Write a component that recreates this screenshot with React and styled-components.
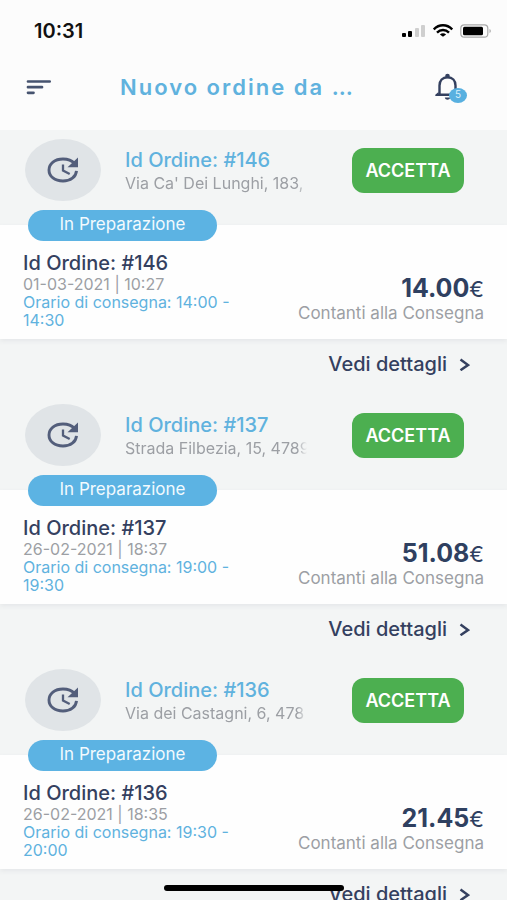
import React from 'react';
import styled, { createGlobalStyle } from 'styled-components';

const GlobalStyle = createGlobalStyle`
  *, *::before, *::after {
    box-sizing: border-box;
  }
  html {
    scrollbar-width: none;
  }
  body {
    margin: 0;
    background-color: #f3f5f5;
    font-family: Inter, "Open Sans", sans-serif;
    color: #34405f;
  }
  h1, h2, h3, p {
    margin: 0;
  }
  button {
    border: 0;
    padding: 0;
    background: none;
    font-family: inherit;
    cursor: pointer;
  }
  svg {
    display: block;
  }
`;

const Header = styled.header`
  background-color: #fcfcfc;
`;

const StatusBar = styled.div`
  display: flex;
  align-items: center;
  justify-content: space-between;
  height: 62px;
  padding: 0 15px 0 34px;
`;

const Time = styled.span`
  font-size: 20px;
  line-height: 24px;
  font-weight: 600;
  color: #111;
`;

const StatusIcons = styled.div`
  display: flex;
  align-items: center;
  gap: 7px;
`;

const NavBar = styled.nav`
  display: flex;
  align-items: center;
  height: 68px;
  padding: 0 40px 18px 26px;
`;

const PageTitle = styled.h1`
  flex: 1;
  margin-left: 68px;
  font-size: 22px;
  line-height: 28px;
  font-weight: 600;
  letter-spacing: 2px;
  color: #60b2de;
`;

const IconButton = styled.button`
  position: relative;
  display: flex;
`;

const Badge = styled.span`
  position: absolute;
  right: 0;
  bottom: -2px;
  width: 18px;
  height: 15px;
  border-radius: 50%;
  background-color: #58b0e0;
  color: #d9effa;
  font-size: 10px;
  line-height: 13px;
  text-align: center;
`;

const OrderTop = styled.div`
  display: flex;
  align-items: flex-start;
  height: 95px;
  padding: 9px 43px 0 25px;
`;

const OrderIcon = styled.div`
  display: flex;
  align-items: center;
  justify-content: center;
  flex-shrink: 0;
  width: 76px;
  height: 62px;
  border-radius: 50%;
  background-color: #e0e4e7;
`;

const OrderInfo = styled.div`
  flex: 1;
  min-width: 0;
  margin: 10px 45px 0 24px;
`;

const OrderName = styled.h2`
  font-size: 20px;
  line-height: 23px;
  font-weight: 500;
  color: ${({ $accent }) => ($accent ? '#60b2de' : '#34405f')};
`;

const Address = styled.p`
  overflow: hidden;
  white-space: nowrap;
  font-size: 16px;
  line-height: 22px;
  color: #9c9fa4;
  mask-image: linear-gradient(to right, #000 calc(100% - 10px), transparent);
`;

const AcceptButton = styled.button`
  flex-shrink: 0;
  width: 112px;
  height: 45px;
  margin-top: 9px;
  padding-bottom: 1px;
  border-radius: 12px;
  background-color: #4caf50;
  color: #fff;
  font-size: 18px;
  font-weight: 600;
`;

const OrderBody = styled.div`
  padding: 0 23px 10px;
  background-color: #fefefe;
  box-shadow: 0 2px 5px rgba(60, 70, 90, .08);
`;

const Status = styled.div`
  position: relative;
  top: -15px;
  width: 189px;
  height: 31px;
  margin: 0 0 -4px 5px;
  border-radius: 16px;
  background-color: #5cb3e3;
  color: #f2fafe;
  font-size: 17px;
  line-height: 29px;
  text-align: center;
`;

const OrderDetails = styled.div`
  display: flex;
  align-items: flex-end;
  justify-content: space-between;
`;

const OrderData = styled.div`
  width: 216px;
`;

const Line = styled.p`
  font-size: 16px;
  line-height: 18px;
  color: ${({ $accent }) => ($accent ? '#60b2de' : '#9c9fa4')};
`;

const Payment = styled.div`
  padding-bottom: 6px;
  text-align: right;
`;

const Price = styled.p`
  font-size: 25px;
  line-height: 28px;
  font-weight: 700;
  color: #2f4060;
  & span {
    font-size: 22px;
    font-weight: 400;
  }
`;

const Method = styled.p`
  font-size: 17px;
  line-height: 20px;
  color: #9c9fa4;
`;

const OrderFooter = styled.div`
  display: flex;
  justify-content: flex-end;
  height: 56px;
  padding: 13px 37px 0 0;
`;

const DetailsLink = styled.a`
  display: flex;
  align-items: center;
  gap: 12px;
  height: 24px;
  font-size: 20px;
  line-height: 24px;
  font-weight: 500;
  color: #34405f;
  text-decoration: none;
`;

const HomeIndicator = styled.div`
  position: fixed;
  bottom: 9px;
  left: 50%;
  width: 180px;
  height: 6px;
  border-radius: 3px;
  background-color: #000;
  transform: translateX(-50%);
`;

const orders = [
  {
    id: 146,
    address: "Via Ca' Dei Lunghi, 183, 4",
    date: '01-03-2021 | 10:27',
    delivery: '14:00 - 14:30',
    price: '14.00',
  },
  {
    id: 137,
    address: 'Strada Filbezia, 15, 4789',
    date: '26-02-2021 | 18:37',
    delivery: '19:00 - 19:30',
    price: '51.08',
  },
  {
    id: 136,
    address: 'Via dei Castagni, 6, 478',
    date: '26-02-2021 | 18:35',
    delivery: '19:30 - 20:00',
    price: '21.45',
  },
];

const SignalIcon = () => (
  <svg width="24" height="14" viewBox="0 0 24 14">
    <rect x="0" y="9" width="4" height="4" rx="1" fill="#000" />
    <rect x="6" y="7" width="4" height="6" rx="1" fill="#000" />
    <rect x="13" y="4" width="4" height="9" rx="1" fill="#cfcfcf" />
    <rect x="19" y="1" width="4" height="12" rx="1" fill="#cfcfcf" />
  </svg>
);

const WifiIcon = () => (
  <svg width="20" height="14" viewBox="0 0 20 14" fill="none" stroke="#000" strokeWidth="2.4">
    <path d="M.8 5.4C6-.1 14-.1 19.2 5.4" />
    <path d="M4 8.6c3.5-3.4 8.5-3.4 12 0" />
    <path d="M10 12.8 6.9 10.4c1.8-1.5 4.4-1.5 6.2 0z" fill="#000" stroke="none" />
  </svg>
);

const BatteryIcon = () => (
  <svg width="32" height="14" viewBox="0 0 32 14">
    <rect x=".8" y=".8" width="27" height="12.4" rx="3.5" fill="none" stroke="#a9a9a9" strokeWidth="1.2" />
    <rect x="3" y="2.8" width="20" height="8.4" rx="1.5" fill="#000" />
    <path d="M29.5 5v4c1.8-.6 1.8-3.4 0-4z" fill="#a9a9a9" />
  </svg>
);

const MenuIcon = () => (
  <svg width="26" height="16" viewBox="0 0 26 16" stroke="#46536f" strokeWidth="2.7" strokeLinecap="round">
    <path d="M2 2.5h21.7M2 8.2h14M2 13.8h5.5" />
  </svg>
);

const BellIcon = () => (
  <svg width="32" height="28" viewBox="0 0 32 28">
    <circle cx="12.5" cy="3" r="2.3" fill="#34405f" />
    <path
      d="M4.5 21v-8.500C4.5 7.5 7.500 4.300 12.500 4.300S20.500 7.500 20.500 12.500V21"
      fill="none"
      stroke="#34405f"
      strokeWidth="2.4"
    />
    <path d="M3.5 19 .3 21.800V23h24.400v-1.200L21.500 19v1.600h-18z" fill="#34405f" />
    <path d="M9.8 24.600h5.400c-.5 2.900-4.900 2.900-5.400 0z" fill="#34405f" />
  </svg>
);

const UpdateIcon = () => (
  <svg width="32" height="26" viewBox="0 0 32 26" fill="none" stroke="#535e7b">
    <path d="M29.5 13.8C29 19.8 23.500 24 16 24 7.800 24 2 19.500 2 13S7.800 2 16 2c5 0 9 1.700 11.500 4.600" strokeWidth="2.9" />
    <path d="M31 .4v9.800H20.500z" fill="#535e7b" stroke="none" />
    <path d="M16 7.500v6l6.700 3.500" strokeWidth="2.3" />
  </svg>
);

const ChevronIcon = () => (
  <svg width="11" height="14" viewBox="0 0 11 14" fill="none" stroke="#34405f" strokeWidth="2.5">
    <path d="M1.500 2.500 9 8l-7.500 5.200" />
  </svg>
);

const OrderItem = ({ order }) => (
  <article>
    <OrderTop>
      <OrderIcon>
        <UpdateIcon />
      </OrderIcon>
      <OrderInfo>
        <OrderName $accent>Id Ordine: #{order.id}</OrderName>
        <Address>{order.address}</Address>
      </OrderInfo>
      <AcceptButton type="button">ACCETTA</AcceptButton>
    </OrderTop>
    <OrderBody>
      <Status>In Preparazione</Status>
      <OrderDetails>
        <OrderData>
          <OrderName as="h3">Id Ordine: #{order.id}</OrderName>
          <Line>{order.date}</Line>
          <Line $accent>Orario di consegna: {order.delivery}</Line>
        </OrderData>
        <Payment>
          <Price>{order.price}<span>€</span></Price>
          <Method>Contanti alla Consegna</Method>
        </Payment>
      </OrderDetails>
    </OrderBody>
    <OrderFooter>
      <DetailsLink href="#">
        Vedi dettagli
        <ChevronIcon />
      </DetailsLink>
    </OrderFooter>
  </article>
);

export default function App() {
  return (
    <>
      <GlobalStyle />
      <Header>
        <StatusBar>
          <Time>10:31</Time>
          <StatusIcons>
            <SignalIcon />
            <WifiIcon />
            <BatteryIcon />
          </StatusIcons>
        </StatusBar>
        <NavBar>
          <IconButton type="button" aria-label="Menu">
            <MenuIcon />
          </IconButton>
          <PageTitle>Nuovo ordine da …</PageTitle>
          <IconButton type="button" aria-label="Notifiche">
            <BellIcon />
            <Badge>5</Badge>
          </IconButton>
        </NavBar>
      </Header>
      <main>
        {orders.map(order => <OrderItem key={order.id} order={order} />)}
      </main>
      <HomeIndicator />
    </>
  );
}
